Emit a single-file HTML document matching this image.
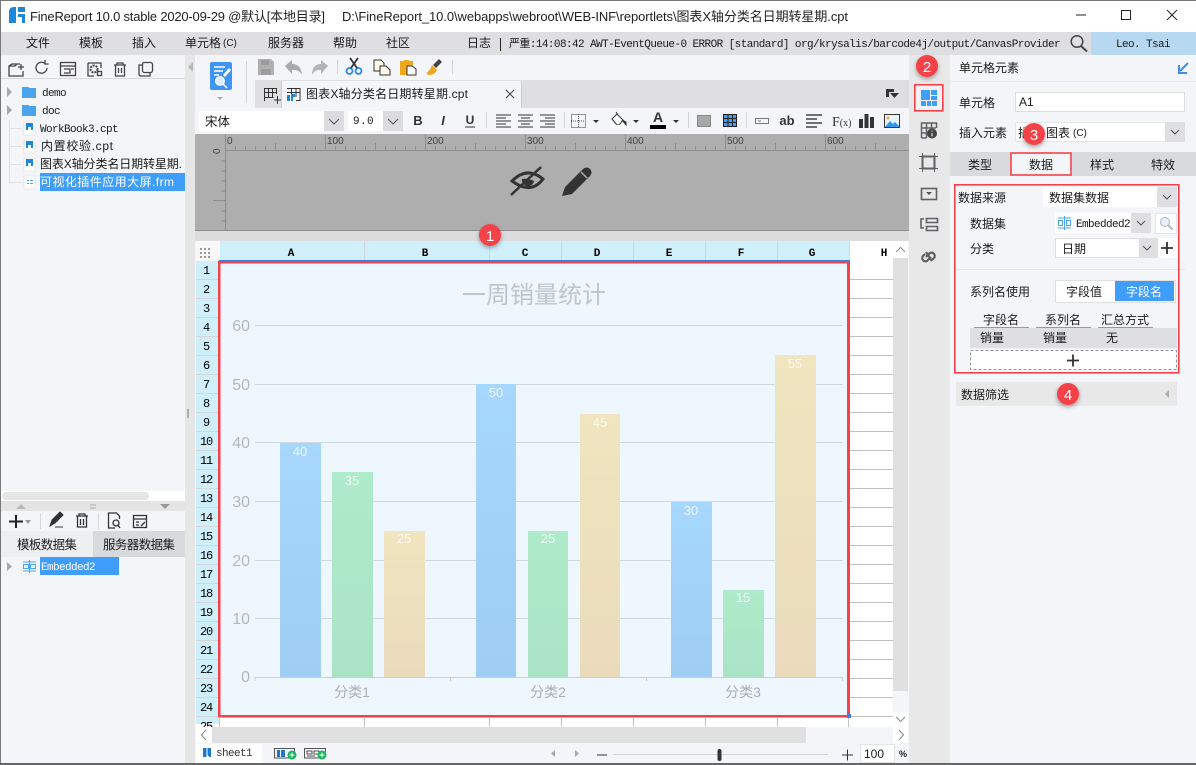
<!DOCTYPE html>
<html lang="zh"><head><meta charset="utf-8"><title>FineReport</title>
<style>
html,body{margin:0;padding:0;width:1196px;height:765px;overflow:hidden;background:#f4f5f8}
svg{position:absolute;left:0;top:0;display:block}
text{font-family:"Liberation Sans","Noto Sans CJK SC",sans-serif;font-size:12px;fill:#1a1a1a}
.m{font-family:"Liberation Mono","Noto Sans CJK SC",monospace;font-size:11px;letter-spacing:-.6px}
.r{font-family:"Liberation Mono",monospace;font-size:12px;text-anchor:middle;letter-spacing:-1.200px;fill:#000}
.h{font-family:"Liberation Mono",monospace;font-size:11px;text-anchor:middle;fill:#000;font-weight:bold}
.t{font-size:13px;fill:#222}
.ax{font-size:16px;fill:#b3b8be;text-anchor:end}
.bv{font-size:13px;fill:#fff;fill-opacity:.8;text-anchor:middle}
.cat{font-size:14px;fill:#a9aeb4;text-anchor:middle}
.ru{font-size:10px;fill:#444}
.n{font-size:15px;fill:#fff;text-anchor:middle}
.ct{text-anchor:middle}
</style></head><body>
<svg width="1196" height="765" viewBox="0 0 1196 765" xmlns="http://www.w3.org/2000/svg">
<defs>
<filter id="s" x="-50%" y="-50%" width="200%" height="200%"><feDropShadow dx="0" dy="2" stdDeviation="2" flood-color="#000" flood-opacity=".35"/></filter>
<linearGradient id="gb" x1="0" y1="0" x2="0" y2="1"><stop offset="0" stop-color="#a6d7fd"/><stop offset="1" stop-color="#9fcdf4"/></linearGradient>
<linearGradient id="gg" x1="0" y1="0" x2="0" y2="1"><stop offset="0" stop-color="#aeebca"/><stop offset="1" stop-color="#abe3c6"/></linearGradient>
<linearGradient id="gt" x1="0" y1="0" x2="0" y2="1"><stop offset="0" stop-color="#f0e5bf"/><stop offset="1" stop-color="#e9dbbc"/></linearGradient>
</defs>

<!-- base areas -->
<rect width="1196" height="765" fill="#f4f5f8"/>
<rect width="1196" height="32" fill="#fff"/>
<rect y="32" width="1196" height="23" fill="#dfdfe1"/>
<rect x="1091" y="32" width="105" height="23" fill="#b6d9f1"/>
<rect x="185" y="55" width="10" height="710" fill="#e6e6e6"/>
<rect x="909" y="55" width="41" height="710" fill="#e8e8e8"/>

<!-- title bar -->
<path d="M9 12q0-5 5-5h2v16H9zM18 7h7v5h-7zM18 14h7v9h-3v-6h-4z" fill="#1e88d8"/>
<text x="30" y="21" class="t" textLength="295">FineReport 10.0 stable 2020-09-29 @默认[本地目录]</text>
<text x="342" y="21" class="t" textLength="506">D:\FineReport_10.0\webapps\webroot\WEB-INF\reportlets\图表X轴分类名日期转星期.cpt</text>
<path d="M1076 15h10" stroke="#222" fill="none"/>
<rect x="1121.500" y="10.500" width="9" height="9" fill="none" stroke="#222"/>
<path d="M1167 10l10 10M1177 10l-10 10" stroke="#222" fill="none"/>

<!-- menu bar -->
<text x="26" y="47">文件</text><text x="79" y="47">模板</text><text x="132" y="47">插入</text>
<text x="185" y="47">单元格</text><text x="223" y="46" style="font-size:10px">(C)</text>
<text x="268" y="47">服务器</text><text x="333" y="47">帮助</text><text x="386" y="47">社区</text>
<text x="467" y="47">日志</text><path d="M500.500 38v13" stroke="#222"/>
<text x="509" y="47" textLength="551" class="m">严重:14:08:42 AWT-EventQueue-0 ERROR [standard] org/krysalis/barcode4j/output/CanvasProvider</text>
<circle cx="1077" cy="41.500" r="5.800" fill="none" stroke="#444" stroke-width="1.500"/><path d="M1081 46l6 5.500" stroke="#444" stroke-width="2"/>
<text x="1143" y="47" class="m ct">Leo. Tsai</text>

<!-- left panel toolbar -->
<g fill="none" stroke="#444" stroke-width="1.300">
<path d="M20 64H12l-3 2v10h14v-5M9 66h6l2-2M21 64v6M18 67h6"/>
<path d="M47 68a5.500 5.500 0 1 1-2-4.500M45 60v4h3.500"/>
<rect x="60.500" y="62.500" width="15" height="13"/><path d="M60 66h16M64 69h6v4h-6M71 69h3"/>
<path d="M88 63h13v5M88 63v13h6"/><circle cx="94" cy="69" r="3.500" stroke-width="2" stroke-dasharray="2 1"/><rect x="97.500" y="71.500" width="4" height="4" />
<path d="M114 65h12M117 65v-2h6v2M115.500 65v11h9V65M118.500 68v5M121.500 68v5"/>
<rect x="142.500" y="62.500" width="10" height="10" rx="2"/><path d="M142 65h-3v9q0 2 2 2h9v-3"/>
</g>
<path d="M1 78.500h184" stroke="#d8d8d8"/>
<path d="M193 62v10l-5-5z" fill="#b8b8b8"/>
<rect x="187" y="409" width="2" height="9" fill="#b0b0b0"/>

<!-- tree -->
<g stroke="#e0e0e0" fill="none"><path d="M9.500 120v62.500h13M9.500 128.500h13M9.500 146.500h13M9.500 164.500h13"/></g>
<path d="M7 87l5 5-5 5zM7 105l5 5-5 5z" fill="#a8a8a8"/>
<path d="M22 87h6l2 1h6v10H22zM22 105h6l2 1h6v10H22z" fill="#4aa5ee"/>
<g fill="#fff" stroke="#e8e8e8"><rect x="24" y="122" width="11" height="13"/><rect x="24" y="140" width="11" height="13"/><rect x="24" y="158" width="11" height="13"/><rect x="24" y="176" width="11" height="13"/></g>
<path d="M26 123h7v7h-2v-3h-3v3h-2zM26 141h7v7h-2v-3h-3v3h-2zM26 159h7v7h-2v-3h-3v3h-2z" fill="#1d86d6"/>
<path d="M27 180h2v1h-2zM30 180h3v1h-3zM27 183h2v1h-2zM30 183h3v1h-3z" fill="#4aa5ee"/>
<text x="42" y="96" class="m">demo</text><text x="42" y="114" class="m">doc</text>
<text x="40" y="132" class="m" textLength="78">WorkBook3.cpt</text>
<text x="41" y="150" textLength="72">内置校验.cpt</text>
<text x="40" y="168" textLength="142">图表X轴分类名日期转星期.</text>
<rect x="40" y="173" width="145" height="18" fill="#3f9dfb"/>
<text x="40" y="186" textLength="134" style="fill:#fff">可视化插件应用大屏.frm</text>

<!-- left scroll / divider -->
<rect x="1" y="491" width="184" height="10" fill="#fff"/>
<rect x="2" y="492" width="147" height="8" rx="4" fill="#e6e6e6"/>
<rect x="1" y="501" width="184" height="10" fill="#e4e4e4"/>
<path d="M16 509l5-5 5 5z" fill="#b8b8b8"/><path d="M160 504h10l-5 5z" fill="#999"/>
<path d="M90 505h6M90 508h6" stroke="#aaa"/>
<path d="M9 521.500h14M16 515v13" stroke="#222" stroke-width="2"/>
<path d="M25 520h6l-3 4z" fill="#999"/>
<path d="M40.500 513v16M98.500 513v16" stroke="#d8d8d8"/>
<path d="M50 526l2-6 8-8 3 3-8 8zM55 527h8" stroke="#333" fill="#333" stroke-width="1"/>
<g fill="none" stroke="#333" stroke-width="1.300">
<path d="M76 516h12M79 516v-2h6v2M77.500 516v11h9v-11M80.500 519v6M83.500 519v6"/>
<path d="M115 528h-6.500v-15h8l3 3v3"/><circle cx="116" cy="523" r="3"/><path d="M118 525l2 3"/>
<rect x="133.500" y="515.500" width="13" height="12"/><path d="M133 519h14M136 522h3M136 525h3M141 526l4-4"/>
</g>
<rect x="93" y="531" width="92" height="26" fill="#d8dadd"/>
<rect x="1" y="531" width="92" height="26" fill="#eeeff1"/>
<text x="47" y="549" class="ct" textLength="60" style="font-size:12.500px">模板数据集</text>
<text x="139" y="549" class="ct" textLength="72" style="font-size:12.500px">服务器数据集</text>
<path d="M7 562l5 4.500-5 4.500z" fill="#a8a8a8"/>
<g stroke="#4aa5ee" fill="none"><path d="M23 562h13M23 571h13M29.500 560v13"/><rect x="23.500" y="564.500" width="5" height="4"/><rect x="30.500" y="564.500" width="5" height="4"/></g>
<rect x="40" y="557" width="79" height="18" fill="#3f9dfb"/>
<text x="41" y="570" class="m" style="fill:#fff" textLength="54">Embedded2</text>

<!-- center toolbar -->
<rect x="210" y="62" width="22" height="28" rx="2" fill="#3e95f2"/>
<path d="M214 67h11M214 71h9M214 75h5" stroke="#fff" stroke-width="1.500"/>
<path d="M223 75l6-7 2 2-6 7z" fill="#fff"/>
<circle cx="220" cy="81" r="4.500" fill="#dfeefc" stroke="#fff"/><path d="M223 84l4 4" stroke="#fff" stroke-width="1.500"/>
<path d="M217 97h6l-3 3z" fill="#aaa"/>
<path d="M246.500 61v42M337.500 60v14M452.500 60v14" stroke="#d5d5d7"/>
<path d="M258 59h13l3 3v13h-16z" fill="#b0b0b0"/><path d="M261 60h8v5h-8zM261 69h10v6h-10z" fill="#9c9c9c"/>
<path d="M285 66l7-6v4q9 0 10 11-3-6-10-5v4z" fill="#aaa"/>
<path d="M328 66l-7-6v4q-9 0-9 11 3-6 9-5v4z" fill="#b4b4b4"/>
<g fill="none"><circle cx="349.500" cy="71" r="3" stroke="#2f88e6" stroke-width="1.800"/><circle cx="358.500" cy="71" r="3" stroke="#2f88e6" stroke-width="1.800"/><path d="M351 68l7-10M357 68l-7-10" stroke="#333" stroke-width="1.800"/></g>
<path d="M374 60h7l3 3v3h-4v5h-6z" fill="#fbf6e6" stroke="#333"/><path d="M380 66h6l4 4v5h-10z" fill="#fbf6e6" stroke="#333"/>
<path d="M400 61h4v-1h5v1h4v14h-13z" fill="#f0a91f"/><path d="M407 66h5l4 3v6h-9z" fill="#fff" stroke="#333"/>
<path d="M439 59l3 3-6 6-3-3z" fill="#444"/><path d="M432 65l5 5q-2 5-9 5 0 0-1-1 1-1-1-1 4-2 6-8z" fill="#f0a91f"/>

<!-- tab row -->
<rect x="255" y="80" width="654" height="28" fill="#dfdfe1"/>
<rect x="282" y="81" width="239" height="27" fill="#f4f5f8"/><path d="M521.500 81v27M281.500 81v27" stroke="#ccc"/>
<g fill="none" stroke="#333"><path d="M264.500 88.500h12M264.500 92.500h12M264.500 97.500h9M264.500 88v13M268.500 88v9M272.500 88v9M276.500 88v6M274 100h7M277.500 96v8"/>
<path d="M287 88.500h13v12h-4M291.500 88v9M296 88v9M287 92.500h13"/></g>
<path d="M287 95h3v6h-3zM291 94h4v3h-2v4h-2z" fill="#1d86d6"/>
<text x="306" y="98" textLength="162">图表X轴分类名日期转星期.cpt</text>
<path d="M506 90l8 8M514 90l-8 8" stroke="#444" fill="none"/>
<path d="M886 89h8v3h-5v5h-3z" fill="#333"/><path d="M890 93h9l-4.500 5z" fill="#333"/>

<!-- format row -->
<rect x="199" y="111" width="145" height="20" fill="#fff"/><rect x="324" y="111" width="20" height="20" fill="#dcdce0"/>
<text x="205" y="126" style="font-size:12.500px">宋体</text>
<path d="M329 119l5 5 5-5" fill="none" stroke="#555"/>
<rect x="348" y="111" width="55" height="20" fill="#fff"/><rect x="383" y="111" width="20" height="20" fill="#dcdce0"/>
<text x="353" y="124" class="m" textLength="20">9.0</text>
<path d="M388 119l5 5 5-5" fill="none" stroke="#555"/>
<text x="418" y="125" class="ct" style="font-size:13px;font-weight:bold;fill:#333">B</text>
<text x="443" y="125" class="ct" style="font-size:13px;font-style:italic;font-weight:bold;fill:#333">I</text>
<text x="470" y="124" class="ct" style="font-size:12px;font-weight:bold;fill:#333">U</text><path d="M465 127h10" stroke="#333"/>
<path d="M486.500 112v16M564.500 112v16M688.500 112v16M746.500 112v16" stroke="#d5d5d7"/>
<path d="M496 115h15M496 118h10M496 121h15M496 124h10M496 127h15M518 115h15M521 118h9M518 121h15M521 124h9M518 127h15M540 115h15M545 118h10M540 121h15M545 124h10M540 127h15" stroke="#333" fill="none"/>
<rect x="571.500" y="114.500" width="14" height="13" fill="none" stroke="#333" stroke-dasharray="1 1"/><path d="M571 121h15M578.500 114v14" stroke="#555" stroke-dasharray="1 1"/>
<path d="M593 120h6l-3 3zM633 120h6l-3 3zM673 120h6l-3 3z" fill="#333"/>
<path d="M612 119l5-5 6 6-4 5h-2z" fill="#fff" stroke="#333"/><path d="M616 112l2 3M622 120l4 2v3z" fill="#333" stroke="#333"/>
<rect x="610" y="125" width="16" height="3" fill="#fff"/>
<text x="658" y="122" class="ct" style="font-size:14px;font-weight:bold;fill:#333">A</text><rect x="650" y="125" width="16" height="4" fill="#000"/>
<rect x="697.500" y="115.500" width="13" height="11" fill="#a8a8a8" stroke="#888"/>
<rect x="723" y="114" width="14" height="13" fill="#3f9dfb"/><path d="M723.500 114.500h13v12h-13zM723 118.500h14M723 122.500h14M728 114v13M732.500 114v13" fill="none" stroke="#222"/>
<rect x="755.500" y="118.500" width="13" height="5" fill="#f4f5f8" stroke="#777"/><path d="M758 121h3" stroke="#777"/>
<text x="787" y="125" class="ct" style="font-size:13px;font-weight:bold;fill:#333">ab</text>
<path d="M806 115h16M806 119h11M806 123h16M806 127h11" stroke="#444" stroke-width="1.600"/>
<text x="832" y="126" style="font-family:'Liberation Serif',serif;font-size:14px;fill:#333">F<tspan style="font-size:10px">(x)</tspan></text>
<path d="M859 119h4v9h-4zM864.500 114h4v14h-4zM870 117h4v11h-4z" fill="#333"/>
<rect x="884.500" y="114.500" width="15" height="13" fill="#e6f3fd" stroke="#333"/><path d="M885 127l5-6 3 3 2-2 4 4v1z" fill="#2f9ae9"/><circle cx="888" cy="118" r="1.500" fill="#f0b030"/>

<!-- ruler + gray -->
<rect x="195" y="134" width="714" height="97" fill="#aeaeae"/>
<path d="M195 230.500h714" stroke="#8e8e8e"/>
<path d="M225 150.500h684M225.500 134v16M225.500 151v79" stroke="#8e8e8e"/>
<path d="M235.500 146v4M245.500 146v4M255.500 146v4M265.500 146v4M275.500 143v7M285.500 146v4M295.500 146v4M305.500 146v4M315.500 146v4M325.500 135v15M335.500 146v4M345.500 146v4M355.500 146v4M365.500 146v4M375.500 143v7M385.500 146v4M395.500 146v4M405.500 146v4M415.500 146v4M425.500 135v15M435.500 146v4M445.500 146v4M455.500 146v4M465.500 146v4M475.500 143v7M485.500 146v4M495.500 146v4M505.500 146v4M515.500 146v4M525.500 135v15M535.500 146v4M545.500 146v4M555.500 146v4M565.500 146v4M575.500 143v7M585.500 146v4M595.500 146v4M605.500 146v4M615.500 146v4M625.500 135v15M635.500 146v4M645.500 146v4M655.500 146v4M665.500 146v4M675.500 143v7M685.500 146v4M695.500 146v4M705.500 146v4M715.500 146v4M725.500 135v15M735.500 146v4M745.500 146v4M755.500 146v4M765.500 146v4M775.500 143v7M785.500 146v4M795.500 146v4M805.500 146v4M815.500 146v4M825.500 135v15M835.500 146v4M845.500 146v4M855.500 146v4M865.500 146v4M875.500 143v7M885.500 146v4M895.500 146v4" stroke="#8e8e8e" fill="none"/>
<path d="M221 161h4M221 171h4M221 181h4M221 191h4M213 200.500h12M221 211h4M221 221h4" stroke="#8e8e8e"/>
<text x="227" y="144" class="ru">0</text><text x="327" y="144" class="ru">100</text><text x="427" y="144" class="ru">200</text><text x="527" y="144" class="ru">300</text><text x="627" y="144" class="ru">400</text><text x="727" y="144" class="ru">500</text><text x="827" y="144" class="ru">600</text>
<text x="217" y="157" class="ru" transform="rotate(-90 217 154)">0</text>
<!-- eye + pencil -->
<path d="M512 181q15-15 31-2-12 16-31 2z" fill="none" stroke="#333" stroke-width="3"/><path d="M522 179a6 6 0 0 0 12 2q-6-3-12-2z" fill="#333"/>
<path d="M511 195l30-28" stroke="#333" stroke-width="2.500"/>
<path d="M562 196l3-9 18-18q4-3 7 0t0 7l-18 18z" fill="#333"/><path d="M581 172l6 6" stroke="#aeaeae" stroke-width="1.500"/>

<rect x="195" y="231" width="714" height="10" fill="#dcdcdc"/>

<!-- sheet -->
<rect x="196" y="241" width="697" height="486" fill="#fff"/>
<rect x="196" y="241" width="24" height="20" fill="#f8f8f8"/>
<path d="M200 248h2v2h-2zM204 248h2v2h-2zM208 248h2v2h-2zM200 252h2v2h-2zM204 252h2v2h-2zM208 252h2v2h-2zM200 256h2v2h-2zM204 256h2v2h-2zM208 256h2v2h-2z" fill="#999"/>
<rect x="220" y="241" width="629" height="20" fill="#cfeffb"/>
<rect x="196" y="261" width="23" height="463" fill="#cfeffb"/>
<path d="M364.500 241v20M489.500 241v20M561.500 241v20M633.500 241v20M705.500 241v20M777.500 241v20M849.500 241v20" stroke="#d6d6d8"/>
<path d="M196 279.500h23M196 298.500h23M196 317.500h23M196 336.500h23M196 355.500h23M196 374.500h23M196 393.500h23M196 412.500h23M196 431.500h23M196 450.500h23M196 469.500h23M196 488.500h23M196 507.500h23M196 526.500h23M196 545.500h23M196 564.500h23M196 583.500h23M196 602.500h23M196 621.500h23M196 640.500h23M196 659.500h23M196 678.500h23M196 697.500h23M196 716.500h23" stroke="#d6d6d8"/>
<path d="M850 279.500h43M850 298.500h43M850 317.500h43M850 336.500h43M850 355.500h43M850 374.500h43M850 393.500h43M850 412.500h43M850 431.500h43M850 450.500h43M850 469.500h43M850 488.500h43M850 507.500h43M850 526.500h43M850 545.500h43M850 564.500h43M850 583.500h43M850 602.500h43M850 621.500h43M850 640.500h43M850 659.500h43M850 678.500h43M850 697.500h43M850 716.500h43" stroke="#c2c2c2"/>
<path d="M219.500 718v9M364.500 718v9M489.500 718v9M561.500 718v9M633.500 718v9M705.500 718v9M777.500 718v9M848.500 718v9" stroke="#c2c2c2"/>
<text x="291" y="256" class="h">A</text><text x="425" y="256" class="h">B</text><text x="525" y="256" class="h">C</text><text x="597" y="256" class="h">D</text><text x="669" y="256" class="h">E</text><text x="741" y="256" class="h">F</text><text x="812" y="256" class="h">G</text><text x="884" y="256" class="h">H</text>
<text x="206" y="274" class="r">1</text><text x="206" y="293" class="r">2</text><text x="206" y="312" class="r">3</text><text x="206" y="331" class="r">4</text><text x="206" y="350" class="r">5</text><text x="206" y="369" class="r">6</text><text x="206" y="388" class="r">7</text><text x="206" y="407" class="r">8</text><text x="206" y="426" class="r">9</text><text x="206" y="445" class="r">10</text><text x="206" y="464" class="r">11</text><text x="206" y="483" class="r">12</text><text x="206" y="502" class="r">13</text><text x="206" y="521" class="r">14</text><text x="206" y="540" class="r">15</text><text x="206" y="559" class="r">16</text><text x="206" y="578" class="r">17</text><text x="206" y="597" class="r">18</text><text x="206" y="616" class="r">19</text><text x="206" y="635" class="r">20</text><text x="206" y="654" class="r">21</text><text x="206" y="673" class="r">22</text><text x="206" y="692" class="r">23</text><text x="206" y="711" class="r">24</text>
<text x="206" y="730" class="r">25</text>

<!-- chart -->
<rect x="220" y="262" width="629" height="455" fill="#eef6fe"/>
<text x="534" y="303" class="ct" style="font-size:24px;fill:#bfc5cc" textLength="144">一周销量统计</text>
<path d="M255 325.500h588M255 384.500h588M255 442.500h588M255 501.500h588M255 560.500h588M255 618.500h588" stroke="#d0d8e2"/>
<path d="M255 681v-3.500h587.500v3.500M450.500 677v4M646.500 677v4" stroke="#c6ced8" fill="none"/>
<text x="250" y="331" class="ax">60</text><text x="250" y="390" class="ax">50</text><text x="250" y="448" class="ax">40</text><text x="250" y="507" class="ax">30</text><text x="250" y="566" class="ax">20</text><text x="250" y="624" class="ax">10</text><text x="250" y="682" class="ax">0</text>
<rect x="280" y="443" width="41" height="234" fill="url(#gb)"/><rect x="332" y="472" width="41" height="205" fill="url(#gg)"/><rect x="384" y="531" width="41" height="146" fill="url(#gt)"/>
<rect x="476" y="384" width="40" height="293" fill="url(#gb)"/><rect x="528" y="531" width="40" height="146" fill="url(#gg)"/><rect x="580" y="414" width="40" height="263" fill="url(#gt)"/>
<rect x="671" y="502" width="41" height="175" fill="url(#gb)"/><rect x="723" y="590" width="41" height="87" fill="url(#gg)"/><rect x="775" y="355" width="41" height="322" fill="url(#gt)"/>
<text x="300" y="456" class="bv">40</text><text x="352" y="485" class="bv">35</text><text x="404" y="543" class="bv">25</text>
<text x="496" y="397" class="bv">50</text><text x="548" y="543" class="bv">25</text><text x="600" y="427" class="bv">45</text>
<text x="691" y="515" class="bv">30</text><text x="743" y="602" class="bv">15</text><text x="795" y="368" class="bv">55</text>
<text x="352" y="697" class="cat">分类1</text><text x="548" y="697" class="cat">分类2</text><text x="743" y="697" class="cat">分类3</text>
<path d="M219 260.500h631" stroke="#3d7fe0"/><path d="M849.500 261v456" stroke="#3d7fe0"/>
<rect x="219.250" y="262.250" width="629" height="454" fill="none" stroke="#f5424a" stroke-width="2.500"/>
<rect x="847" y="714" width="4" height="4" fill="#3d7fe0"/>

<!-- scrollbars -->
<rect x="893" y="241" width="16" height="486" fill="#f4f5f8"/>
<rect x="893" y="241" width="15" height="17" fill="#fff"/><path d="M896 252l4.500-4.500 4.500 4.500" fill="none" stroke="#888"/>
<rect x="893" y="258" width="15" height="433" fill="#e0e0e0"/>
<rect x="893" y="712" width="15" height="15" fill="#fff"/><path d="M896 717l4.500 4.500 4.500-4.500" fill="none" stroke="#888"/>
<rect x="196" y="727" width="713" height="16" fill="#f4f5f8"/>
<rect x="196" y="727" width="16" height="16" fill="#fff"/><path d="M206 730l-4.500 5 4.500 5" fill="none" stroke="#888"/>
<rect x="212" y="727" width="594" height="16" fill="#e0e0e0"/>
<rect x="893" y="727" width="15" height="16" fill="#fff"/><path d="M899 730l4.500 5-4.500 5" fill="none" stroke="#888"/>

<!-- sheet tabs / zoom -->
<rect x="196" y="743" width="713" height="20" fill="#f4f5f8"/>
<rect x="196" y="744" width="66" height="19" fill="#fff"/>
<path d="M203 748h3.500v9H203zM207.500 748h3.500v9h-1.500l-2-2z" fill="#1d78c8"/>
<text x="216" y="756" class="m" style="fill:#333">sheet1</text>
<path d="M274.500 748.500h20v3l-4 6.500h-16zM304.500 748.500h21v3l-4 6.500h-17z" fill="#f4f5f8" stroke="#555"/>
<path d="M277 750h3v7h-3zM281 750h4v7h-4z" fill="#1d78c8"/>
<path d="M307 751h5v3h-5zM314 751h5v3h-5zM307 756h8" stroke="#555" fill="none"/>
<circle cx="292" cy="755" r="4.500" fill="#18b55c"/><circle cx="322" cy="755" r="4.500" fill="#18b55c"/>
<path d="M289.500 755h5M292 752.500v5M319.500 755h5M322 752.500v5" stroke="#fff"/>
<path d="M555 750v7l-4-3.500zM575 750v7l4-3.500z" fill="#aaa"/>
<path d="M597 755h10" stroke="#333"/><path d="M613 754.500h215" stroke="#d5d5d5"/>
<rect x="717.500" y="749" width="4" height="12" rx="2" fill="#333"/>
<path d="M842 755h11M847.500 749.500v11" stroke="#333"/>
<rect x="860.500" y="744.500" width="34" height="18" fill="#fff" stroke="#e4e4e4"/>
<text x="864" y="758" style="font-size:12px">100</text>
<text x="899" y="757" style="font-size:9px;font-weight:bold">%</text>

<!-- side icons -->
<rect x="914" y="84" width="29" height="27" fill="#f2f2f4"/>
<path d="M921 90h9v10h-9zM931 90h6v5h-6zM931 96h6v4h-6zM921 101h5v5h-5zM927 101h4v5h-4zM932 101h5v5h-5z" fill="#3f9dfb"/>
<g fill="none" stroke="#5f5f66" stroke-width="1.500">
<path d="M921.500 138v-15h15v5M921 128h15M921 133h5M926.500 123v15M931.500 123v5M921.500 138h5"/>
<rect x="922.500" y="156.500" width="12" height="12" stroke-width="2"/><path d="M919 156.500h19M919 168.500h19M922.500 153v19M934.500 153v19" stroke-width="1"/>
<rect x="921.500" y="188.500" width="15" height="11" stroke-width="1.600"/>
<path d="M924 219h-3v9h3M926.500 218.500h11v4h-11zM926.500 226.500h11v4h-11z" stroke-width="1.600"/>
<path d="M925 254l-2 2a3 3 0 0 0 0 4 3 3 0 0 0 5 0l3-3M932 260l2-2a3 3 0 0 0 0-4 3 3 0 0 0-5 0l-3 3M926 252l6 9" stroke-width="2.200"/>
</g>
<circle cx="932" cy="133.500" r="5" fill="#444"/><path d="M932 130.500v1M932 133v3.500" stroke="#fff"/>
<path d="M926 192h6l-3 3z" fill="#555"/>

<!-- right panel -->
<rect x="950" y="55" width="246" height="708" fill="#f4f5f8"/>
<text x="959" y="72">单元格元素</text>
<path d="M1188 63l-8 8M1179 65v8h8" fill="none" stroke="#3f8fe8" stroke-width="2"/>
<path d="M950 81.500h246" stroke="#ececee"/>
<text x="959" y="107" style="font-size:12px">单元格</text>
<rect x="1015.500" y="92.500" width="169" height="19" fill="#fff" stroke="#ddd"/>
<text x="1019" y="106">A1</text>
<text x="959" y="137">插入元素</text>
<rect x="1015.500" y="122.500" width="169" height="19" fill="#fff" stroke="#e6e6e6"/>
<rect x="1165" y="122" width="20" height="20" fill="#dfdfe1"/><path d="M1171 130l4 4 4-4" fill="none" stroke="#555"/>
<text x="1018" y="137">插</text>
<text x="1046" y="137">图表</text><text x="1073" y="136" style="font-size:10px">(C)</text>
<rect x="950" y="152" width="246" height="24" fill="#d8dadd"/>
<rect x="1011" y="152" width="61" height="24" fill="#f4f5f8"/>
<text x="980" y="169" class="ct">类型</text><text x="1041" y="169" class="ct">数据</text><text x="1102" y="169" class="ct">样式</text><text x="1163" y="169" class="ct">特效</text>
<rect x="1011" y="153" width="60" height="22" fill="none" stroke="#f5424a" stroke-width="1.600"/>
<text x="958" y="202">数据来源</text>
<rect x="1043" y="187" width="134" height="20" fill="#fff"/><rect x="1157" y="187" width="20" height="20" fill="#dfdfe1"/>
<text x="1049" y="202">数据集数据</text>
<text x="970" y="228">数据集</text>
<rect x="1055" y="213" width="96" height="20" fill="#fff"/><rect x="1131" y="213" width="20" height="20" fill="#dfdfe1"/>
<g stroke="#4aa5ee" fill="none"><path d="M1058 218h13M1058 228h13M1064.500 216v14"/><rect x="1058.500" y="220.500" width="4" height="5"/><rect x="1066.500" y="220.500" width="4" height="5"/></g>
<text x="1076" y="227" class="m" textLength="54">Embedded2</text>
<rect x="1155.500" y="213.500" width="21" height="20" fill="#fff" stroke="#e4e4e4"/>
<circle cx="1165" cy="222" r="4.500" fill="#e6f0fa" stroke="#b0b8c0"/><path d="M1168.500 225.500l4 4" stroke="#b0b8c0" stroke-width="2"/>
<text x="970" y="253">分类</text>
<rect x="1055.500" y="238.500" width="103" height="19" fill="#fff" stroke="#e0e0e0"/><rect x="1139" y="239" width="19" height="19" fill="#dfdfe1"/>
<path d="M1163 195l4 4 4-4M1137 221l4 4 4-4M1143 246l4 4 4-4" fill="none" stroke="#555"/>
<text x="1062" y="253">日期</text>
<rect x="1158" y="238" width="19" height="20" fill="#fff"/><path d="M1161 248h12M1167 242v12" stroke="#333" stroke-width="1.800"/>
<path d="M955 269.500h230" stroke="#e9e7da"/>
<text x="970" y="296">系列名使用</text>
<rect x="1055.500" y="280.500" width="120" height="22" fill="#fff" stroke="#e0e0e0"/>
<rect x="1115" y="281" width="59" height="20" fill="#3f9dfb"/>
<text x="1084" y="296" class="ct">字段值</text><text x="1144" y="296" class="ct" style="fill:#fff">字段名</text>
<text x="983" y="324">字段名</text><text x="1045" y="324">系列名</text><text x="1101" y="324">汇总方式</text>
<path d="M974 327.500h55M1036 327.500h55M1098 327.500h55" stroke="#999"/>
<rect x="970" y="328" width="207" height="20" fill="#dfdfe1"/>
<text x="980" y="342">销量</text><text x="1043" y="342">销量</text><text x="1106" y="342">无</text>
<rect x="970.500" y="350.500" width="206" height="19" fill="#fff" stroke="#999" stroke-dasharray="3 2"/>
<path d="M1067 360.500h12M1073 354.500v12" stroke="#333" stroke-width="1.800"/>
<rect x="954.800" y="184.800" width="224" height="188" fill="none" stroke="#f5424a" stroke-width="1.600"/>
<rect x="956" y="382" width="221" height="24" fill="#e8e8e8"/>
<text x="961" y="399">数据筛选</text>
<path d="M1169 390v8l-4-4z" fill="#aaa"/>

<!-- highlight box 2 -->
<rect x="914.800" y="84.800" width="28" height="26" fill="none" stroke="#f5424a" stroke-width="1.600"/>

<!-- badges -->
<g filter="url(#s)" fill="#f5424a"><circle cx="490" cy="235" r="11"/><circle cx="927" cy="66" r="11"/><circle cx="1034" cy="134" r="11"/><circle cx="1068" cy="394" r="11"/></g>
<text x="490" y="241" class="n">1</text><text x="927" y="72" class="n">2</text><text x="1034" y="140" class="n">3</text><text x="1068" y="400" class="n">4</text>

<!-- window border -->
<path d="M.5 0v765M0 .5h1196" stroke="#777"/><rect y="763" width="1196" height="2" fill="#666"/>
</svg>
</body></html>
